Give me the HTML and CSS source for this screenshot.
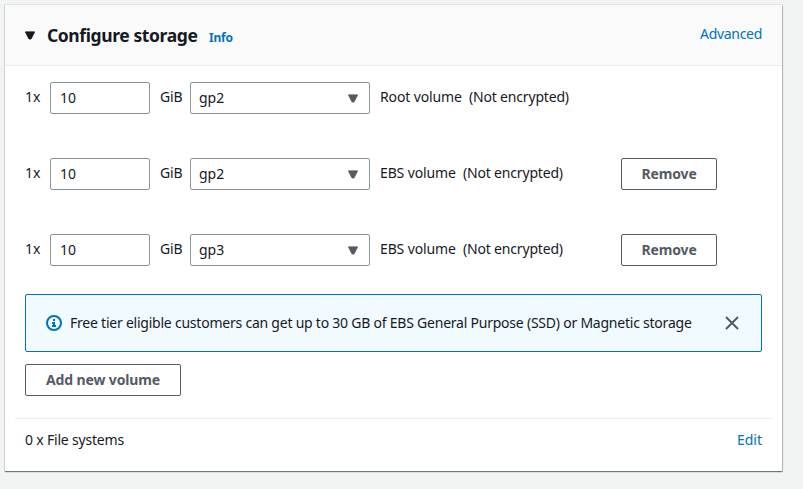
FILE: index.html
```html
<!DOCTYPE html>
<html lang="en">
<head>
<meta charset="utf-8">
<title>Configure storage</title>
<link rel="stylesheet" href="styles.css">
</head>
<body>
<section class="card">
  <header class="card-header">
    <svg class="caret caret-dark" width="10" height="9" viewBox="0 0 10 9"><path d="M.5.9h9L6 7.9H4z"/></svg>
    <h2 class="title">Configure storage</h2>
    <a class="info">Info</a>
    <a class="link advanced">Advanced</a>
  </header>
  <div class="card-body">
    <div class="volume">
      <span class="text count">1x</span>
      <div class="field size">10</div>
      <span class="text unit">GiB</span>
      <div class="field select">gp2<svg class="caret" width="10" height="9" viewBox="0 0 10 9"><path d="M.5.9h9L6 7.9H4z"/></svg></div>
      <span class="text kind root">Root volume</span>
      <span class="text encryption">(Not encrypted)</span>
    </div>
    <div class="volume">
      <span class="text count">1x</span>
      <div class="field size">10</div>
      <span class="text unit">GiB</span>
      <div class="field select">gp2<svg class="caret" width="10" height="9" viewBox="0 0 10 9"><path d="M.5.9h9L6 7.9H4z"/></svg></div>
      <span class="text kind">EBS volume</span>
      <span class="text encryption">(Not encrypted)</span>
      <button class="button remove">Remove</button>
    </div>
    <div class="volume">
      <span class="text count">1x</span>
      <div class="field size">10</div>
      <span class="text unit">GiB</span>
      <div class="field select">gp3<svg class="caret" width="10" height="9" viewBox="0 0 10 9"><path d="M.5.9h9L6 7.9H4z"/></svg></div>
      <span class="text kind">EBS volume</span>
      <span class="text encryption">(Not encrypted)</span>
      <button class="button remove">Remove</button>
    </div>
    <div class="alert">
      <svg class="alert-icon" width="16" height="16" viewBox="0 0 16 16"><circle cx="8" cy="8" r="7"/><path d="M7 5h2M6 8h2v3M6 11h4"/></svg>
      <span class="alert-text">Free tier eligible customers can get up to 30 GB of EBS General Purpose (SSD) or Magnetic storage</span>
      <svg class="close" width="14" height="14" viewBox="0 0 14 14"><path d="M1 1l12 12M13 1L1 13"/></svg>
    </div>
    <button class="button add">Add new volume</button>
  </div>
  <footer class="card-footer">
    <span class="files">0 x File systems</span>
    <a class="link edit">Edit</a>
  </footer>
</section>
</body>
</html>
```
FILE: styles.css
```css
* { box-sizing: border-box; }
body {
  margin: 0;
  padding: 5px;
  background: #f2f3f3;
  color: #16191f;
  font: 14px/22px "Noto Sans", sans-serif;
}
.card {
  width: 777px;
  height: 466px;
  background: #fff;
  box-shadow: 0 1px 1px rgba(0, 28, 36, .45), 1px 1px 1px rgba(0, 28, 36, .15), 0 0 0 1px #dfe3e3;
  white-space: nowrap;
}
.card-header {
  display: flex;
  align-items: center;
  height: 61px;
  padding: 0 20px;
  background: #fafafa;
  border-bottom: 1px solid #eaeded;
}
.title {
  width: 151px;
  margin: 0 0 0 12px;
  font-size: 17.5px;
  line-height: 22px;
  font-weight: 700;
  letter-spacing: -.4px;
}
.info { margin: 5px 0 0 11px; font-size: 12px; font-weight: 700; letter-spacing: -.2px; color: #0073bb; }
.link { margin-left: auto; color: #0073bb; }
.advanced { margin-top: -3px; letter-spacing: -.3px; }
.card-body { padding: 16px 20px 0; }
.volume { display: flex; align-items: center; height: 32px; margin-bottom: 44px; }
.text { margin-top: -2px; letter-spacing: -.13px; }
.count { width: 25px; }
.field {
  display: flex;
  align-items: center;
  height: 32px;
  border: 1px solid #879596;
  border-radius: 2px;
  padding: 0 11px 0 8px;
}
.size { width: 100px; padding-left: 9px; }
.unit { width: 40px; padding-left: 10px; }
.select { width: 180px; justify-content: space-between; }
.caret { fill: #545b64; stroke: #545b64; stroke-linejoin: round; }
.caret-dark { fill: #16191f; stroke: #16191f; }
.kind { margin-left: 10px; width: 83px; }
.root { width: 89px; }
.encryption { letter-spacing: -.18px; }
.button {
  height: 32px;
  padding: 0;
  border: 1px solid #545b64;
  border-radius: 2px;
  background: #fff;
  color: #545b64;
  font: 700 14px/20px "Noto Sans", sans-serif;
  letter-spacing: -.13px;
}
.remove { width: 96px; margin-left: auto; margin-right: 45px; }
.alert {
  display: flex;
  align-items: center;
  height: 58px;
  margin-top: -16px;
  padding: 0 22px 0 20px;
  border: 1px solid #0073bb;
  border-radius: 2px;
  background: #f1faff;
}
.alert-icon { fill: none; stroke: #0073bb; stroke-width: 2; }
.alert-text { margin-left: 8px; letter-spacing: -.228px; }
.close { margin-left: auto; fill: none; stroke: #545b64; stroke-width: 2; }
.add { display: block; width: 156px; margin-top: 12px; }
.card-footer {
  display: flex;
  align-items: center;
  height: 42px;
  margin: 22px 10px 0;
  padding: 0 10px;
  border-top: 1px solid #eaeded;
}
.files { letter-spacing: -.19px; }
```
